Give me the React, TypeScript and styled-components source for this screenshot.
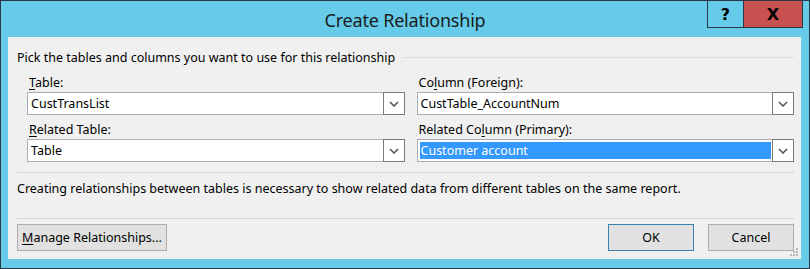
import React from "react";
import styled, { createGlobalStyle } from "styled-components";

const Global = createGlobalStyle`
  html, body { margin: 0; padding: 0; background: #ffffff; }
  * { box-sizing: border-box; }
`;

const font = `"Noto Sans", "Open Sans", "Liberation Sans", sans-serif`;

const Window = styled.div`
  width: 810px;
  height: 269px;
  border: 1px solid #2b3947;
  background: #65cbe9;
  display: flex;
  flex-direction: column;
  font-family: ${font};
  font-size: 12.5px;
  color: #000;
`;

const TitleBar = styled.div`
  height: 36px;
  display: grid;
  grid-template-columns: 1fr auto 1fr;
  align-items: start;
`;

const Title = styled.div`
  grid-column: 2;
  padding-top: 7px;
  font-size: 18px;
  color: #1b1b1b;
  letter-spacing: -0.2px;
`;

const Caption = styled.div`
  grid-column: 3;
  justify-self: end;
  display: flex;
  margin-top: -1px;
  margin-right: 6px;
`;

const CapButton = styled.div<{ $close?: boolean }>`
  width: ${(p) => (p.$close ? "60px" : "37px")};
  height: 28px;
  border: 1px solid #2b3947;
  margin-left: ${(p) => (p.$close ? "-1px" : "0")};
  background: ${(p) => (p.$close ? "#c75050" : "#65cbe9")};
  display: flex;
  align-items: center;
  justify-content: center;
  font-family: "DejaVu Sans", sans-serif;
  font-weight: bold;
  font-size: 16px;
  color: #000;
`;

const Client = styled.div`
  position: relative;
  flex: 1;
  margin: 0 8px 9px 7px;
  background: #f0f0f0;
  display: flex;
  flex-direction: column;
  padding: 12px 7px 0 9px;
`;

const GroupHeader = styled.div`
  display: flex;
  align-items: center;
  gap: 7px;
  height: 16px;
`;

const HeaderLine = styled.div`
  flex: 1;
  height: 1px;
  background: #d6dfe6;
`;

const Fields = styled.div`
  display: grid;
  grid-template-columns: 1fr 1fr;
  column-gap: 12px;
  padding-left: 10px;
  margin-top: 9px;
  margin-bottom: 4px;
`;

const Field = styled.div`
  display: flex;
  flex-direction: column;
`;

const Label = styled.div`
  height: 17px;
  line-height: 17px;
  padding-left: 2px;
  margin-bottom: 1px;
`;

const Combo = styled.div`
  height: 23px;
  border: 1px solid #abadb3;
  background: #fff;
  display: flex;
  align-items: stretch;
  margin-bottom: 6px;
`;

const ComboText = styled.div<{ $selected?: boolean }>`
  flex: 1;
  margin: 2px 1px 2px 2px;
  padding-left: 1px;
  display: flex;
  align-items: center;
  background: ${(p) => (p.$selected ? "#3399ff" : "transparent")};
  color: ${(p) => (p.$selected ? "#fff" : "#000")};
`;

const DropButton = styled.div`
  width: 22px;
  margin: -1px -1px -1px 0;
  border: 1px solid #7a7a7a;
  background: #fff;
  display: flex;
  align-items: center;
  justify-content: center;
`;

const Separator = styled.div`
  height: 1px;
  background: #d5d5d5;
`;

const Description = styled.div`
  height: 45px;
  line-height: 15px;
  padding-top: 8px;
`;

const Footer = styled.div`
  display: flex;
  align-items: center;
  padding-top: 5px;
`;

const Button = styled.div<{ $default?: boolean }>`
  height: 27px;
  border: 1px solid ${(p) => (p.$default ? "#3c7fb1" : "#adadad")};
  background: #e1e1e1;
  display: flex;
  align-items: center;
  justify-content: center;
`;

const ManageButton = styled(Button)`
  width: 150px;
`;

const Spacer = styled.div`
  flex: 1;
`;

const DialogButton = styled(Button)`
  width: 86px;
  margin-left: 14px;
`;

const U = styled.span`
  text-decoration: underline;
  text-underline-offset: 2px;
`;

const Grip = styled.svg`
  position: absolute;
  right: 3px;
  bottom: 1px;
`;

function Chevron() {
  return (
    <svg width="10" height="6" viewBox="0 0 10 6">
      <path d="M1 1 L5 5 L9 1" fill="none" stroke="#505050" strokeWidth="1.5" />
    </svg>
  );
}

function ComboBox({ value, selected }: { value: string; selected?: boolean }) {
  return (
    <Combo>
      <ComboText $selected={selected}>{value}</ComboText>
      <DropButton>
        <Chevron />
      </DropButton>
    </Combo>
  );
}

export default function App() {
  return (
    <>
      <Global />
      <Window>
        <TitleBar>
          <Title>Create Relationship</Title>
          <Caption>
            <CapButton>?</CapButton>
            <CapButton $close>X</CapButton>
          </Caption>
        </TitleBar>
        <Client>
          <GroupHeader>
            <span>Pick the tables and columns you want to use for this relationship</span>
            <HeaderLine />
          </GroupHeader>
          <Fields>
            <Field>
              <Label>
                <U>T</U>able:
              </Label>
              <ComboBox value="CustTransList" />
              <Label>
                <U>R</U>elated Table:
              </Label>
              <ComboBox value="Table" />
            </Field>
            <Field>
              <Label>
                Co<U>l</U>umn (Foreign):
              </Label>
              <ComboBox value="CustTable_AccountNum" />
              <Label>
                Related Co<U>l</U>umn (Primary):
              </Label>
              <ComboBox value="Customer account" selected />
            </Field>
          </Fields>
          <Separator />
          <Description>
            Creating relationships between tables is necessary to show related data from different tables on the same report.
          </Description>
          <Separator />
          <Footer>
            <ManageButton>
              <span>
                <U>M</U>anage Relationships...
              </span>
            </ManageButton>
            <Spacer />
            <DialogButton $default>OK</DialogButton>
            <DialogButton>Cancel</DialogButton>
          </Footer>
          <Grip width="11" height="11" viewBox="0 0 11 11">
            {[
              [9, 1],
              [6, 4],
              [9, 4],
              [3, 7],
              [6, 7],
              [9, 7],
            ].map(([x, y]) => (
              <rect key={`${x}-${y}`} x={x} y={y} width="2" height="2" fill="#b9b9b9" />
            ))}
          </Grip>
        </Client>
      </Window>
    </>
  );
}
